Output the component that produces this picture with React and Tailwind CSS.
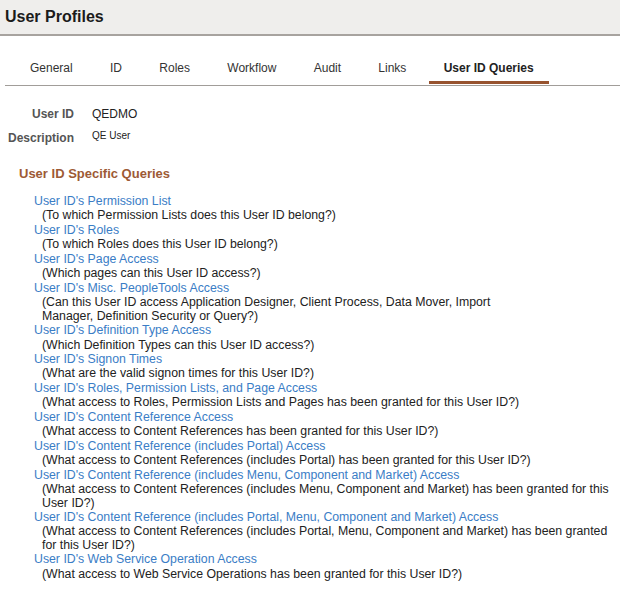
import React from 'react';

const tabs = ['General', 'ID', 'Roles', 'Workflow', 'Audit', 'Links', 'User ID Queries'];

// Query links with their descriptions; each desc entry is one printed line, as on the source page
const queries = [
  { title: "User ID's Permission List", desc: ['(To which Permission Lists does this User ID belong?)'] },
  { title: "User ID's Roles", desc: ['(To which Roles does this User ID belong?)'] },
  { title: "User ID's Page Access", desc: ['(Which pages can this User ID access?)'] },
  {
    title: "User ID's Misc. PeopleTools Access",
    desc: ['(Can this User ID access Application Designer, Client Process, Data Mover, Import', 'Manager, Definition Security or Query?)'],
  },
  { title: "User ID's Definition Type Access", desc: ['(Which Definition Types can this User ID access?)'] },
  { title: "User ID's Signon Times", desc: ['(What are the valid signon times for this User ID?)'] },
  {
    title: "User ID's Roles, Permission Lists, and Page Access",
    desc: ['(What access to Roles, Permission Lists and Pages has been granted for this User ID?)'],
  },
  {
    title: "User ID's Content Reference Access",
    desc: ['(What access to Content References has been granted for this User ID?)'],
  },
  {
    title: "User ID's Content Reference (includes Portal) Access",
    desc: ['(What access to Content References (includes Portal) has been granted for this User ID?)'],
  },
  {
    title: "User ID's Content Reference (includes Menu, Component and Market) Access",
    desc: ['(What access to Content References (includes Menu, Component and Market) has been granted for this', 'User ID?)'],
  },
  {
    title: "User ID's Content Reference (includes Portal, Menu, Component and Market) Access",
    desc: ['(What access to Content References (includes Portal, Menu, Component and Market) has been granted', 'for this User ID?)'],
  },
  {
    title: "User ID's Web Service Operation Access",
    desc: ['(What access to Web Service Operations has been granted for this User ID?)'],
  },
];

const App = () => {
  return (
    <div className="w-[620px] min-h-[603px] bg-white text-[#333] font-['Liberation_Sans',Arial,sans-serif]">
      {/* Page header */}
      <div className="h-[36px] bg-[#efeeec] border-b-2 border-[#a7a39f] flex items-center pl-[5px]">
        <h1 className="text-[16px] font-bold text-[#1b1b1b] leading-none">User Profiles</h1>
      </div>

      {/* Tabs */}
      <div className="pt-[25px] ml-[5px]">
        <div className="flex gap-[7.3px] pl-[10px] pb-[1px] border-b border-[#a19d99]">
          {tabs.map((tab) => {
            const active = tab === 'User ID Queries';
            return (
              <div key={tab} className="flex flex-col">
                <span
                  className={
                    active
                      ? 'px-[15px] text-[12px] leading-[15px] font-bold text-[#222]'
                      : 'px-[15px] text-[12px] leading-[15px] text-[#333]'
                  }
                >
                  {tab}
                </span>
                <span className={active ? 'mt-[5px] h-[3px] bg-[#97532f]' : 'mt-[5px] h-[3px]'} />
              </div>
            );
          })}
        </div>
      </div>

      {/* User info */}
      <div className="mt-[20px] grid grid-cols-[74px_1fr] gap-x-[18px] gap-y-[8px]">
        <div className="text-right text-[12px] leading-[16px] font-bold text-[#555]">User ID</div>
        <div className="text-[12px] leading-[16px] text-[#222]">QEDMO</div>
        <div className="text-right text-[12px] leading-[16px] font-bold text-[#555]">Description</div>
        <div className="text-[10px] leading-[11px] text-[#222]">QE User</div>
      </div>

      {/* Queries */}
      <h2 className="mt-[20px] pl-[19px] text-[13px] leading-[16px] font-bold text-[#9d5a35]">
        User ID Specific Queries
      </h2>

      <div className="mt-[12px] pl-[34px] pr-[8px]">
        {queries.map((q) => (
          <div key={q.title}>
            <a href="#" className="block text-[12.3px] leading-[15.4px] text-[#3a7dc6]">
              {q.title}
            </a>
            <p className="pl-[8px] text-[12.3px] leading-[13.5px] text-[#222] whitespace-nowrap">
              {q.desc.map((line, i) => (
                <React.Fragment key={i}>
                  {i > 0 && <br />}
                  {line}
                </React.Fragment>
              ))}
            </p>
          </div>
        ))}
      </div>
    </div>
  );
};

export default App;
